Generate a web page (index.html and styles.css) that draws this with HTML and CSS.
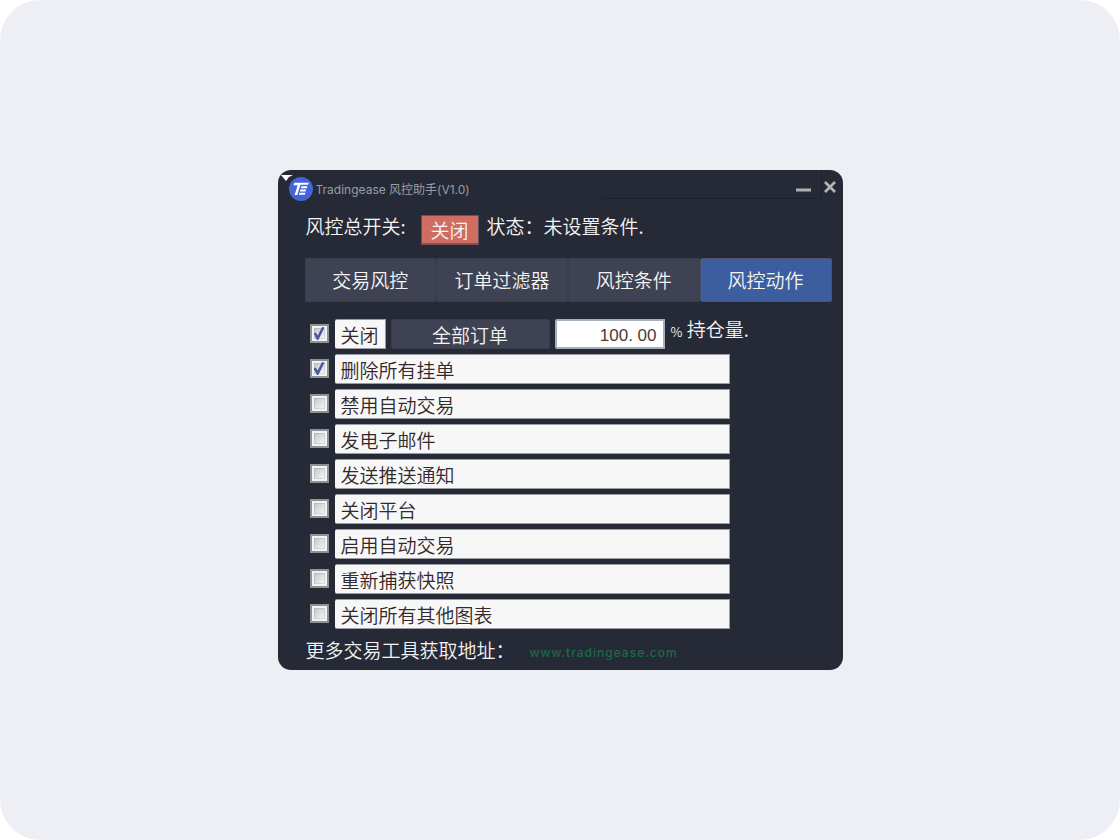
FILE: index.html
```html
<!DOCTYPE html>
<html lang="zh-CN">
<head>
    <meta charset="UTF-8">
    <meta name="viewport" content="width=device-width, initial-scale=1.0">
    <title>Tradingease 风控助手</title>
    <link rel="stylesheet" href="styles.css">
</head>
<body>
    <main class="stage">
        <div class="panel">
            <svg class="corner" width="12" height="7" viewBox="0 0 12 7"><path d="M0 0H12L8 2L5 6Z" fill="#fff"/></svg>

            <!-- 标题栏 -->
            <header class="titlebar">
                <svg class="logo" width="24" height="24" viewBox="0 0 24 24">
                    <circle cx="12" cy="12" r="12" fill="#4465d8"/>
                    <path d="M5.4 5.8H19.8L19.1 7.8H11.4L8.2 18H5.6L8.7 8.2H4.4Z" fill="#fff"/>
                    <path d="M12.4 9.3H18.4L17.8 11.2H11.8ZM11.4 12.5H17.2L16.6 14.4H10.8ZM10.4 15.8H16.4L15.8 17.8H9.8Z" fill="#fff"/>
                </svg>
                <h1>Tradingease 风控助手(V1.0)</h1>
                <div class="window-bar">
                    <button type="button" class="icon-btn" aria-label="最小化">
                        <svg width="15" height="4" viewBox="0 0 15 4"><path d="M0 .5H15V3.5H0Z" fill="#b0b0b3"/></svg>
                    </button>
                </div>
                <button type="button" class="icon-btn close" aria-label="关闭窗口">
                    <svg width="12" height="12" viewBox="0 0 12 12"><path d="M1 1L11 11M11 1L1 11" stroke="#b6b6b6" stroke-width="2.6"/></svg>
                </button>
            </header>

            <div class="master">
                <span class="master-label">风控总开关:</span>
                <button type="button" class="switch">关闭</button>
                <span>状态：未设置条件.</span>
            </div>

            <nav class="tabs">
                <button type="button">交易风控</button>
                <button type="button">订单过滤器</button>
                <button type="button">风控条件</button>
                <button type="button" class="active">风控动作</button>
            </nav>

            <!-- 风控动作列表 -->
            <div class="actions">
                <div class="row">
                    <input type="checkbox" id="a1" checked>
                    <label for="a1" class="short">关闭</label>
                    <button type="button" class="orders">全部订单</button>
                    <input type="text" class="percent" id="percent" value="100. 00">
                    <label for="percent" class="unit"><small>%</small> 持仓量.</label>
                </div>
                <div class="row">
                    <input type="checkbox" id="a2" checked>
                    <label for="a2" class="field">删除所有挂单</label>
                </div>
                <div class="row">
                    <input type="checkbox" id="a3">
                    <label for="a3" class="field">禁用自动交易</label>
                </div>
                <div class="row">
                    <input type="checkbox" id="a4">
                    <label for="a4" class="field">发电子邮件</label>
                </div>
                <div class="row">
                    <input type="checkbox" id="a5">
                    <label for="a5" class="field">发送推送通知</label>
                </div>
                <div class="row">
                    <input type="checkbox" id="a6">
                    <label for="a6" class="field">关闭平台</label>
                </div>
                <div class="row">
                    <input type="checkbox" id="a7">
                    <label for="a7" class="field">启用自动交易</label>
                </div>
                <div class="row">
                    <input type="checkbox" id="a8">
                    <label for="a8" class="field">重新捕获快照</label>
                </div>
                <div class="row">
                    <input type="checkbox" id="a9">
                    <label for="a9" class="field">关闭所有其他图表</label>
                </div>
            </div>

            <footer>
                <span>更多交易工具获取地址：</span>
                <a href="#">www.tradingease.com</a>
            </footer>
        </div>
    </main>
</body>
</html>
```
FILE: styles.css
```css
* {
    box-sizing: border-box;
}

body {
    margin: 0;
    background-color: #fff;
    font-family: "Noto Sans CJK SC", sans-serif;
    font-size: 19px;
    font-weight: 350;
    line-height: 30px;
    color: #f4f4f4;
}

button, input {
    margin: 0;
    padding: 0;
    border: none;
    font: inherit;
    color: inherit;
}

.stage {
    display: flex;
    align-items: center;
    justify-content: center;
    min-height: 100vh;
    background-color: #eeeff5;
    border-radius: 40px;
}

.panel {
    position: relative;
    width: 100%;
    max-width: 565px;
    padding: 0 11px;
    background-color: #262a36;
    border-radius: 13px;
}

.corner {
    position: absolute;
    top: 5px;
    left: 3px;
}

/* 标题栏 */
.titlebar {
    display: flex;
    height: 40px;
}

.logo {
    margin-top: 7px;
}

h1 {
    flex: 1;
    margin: 0 0 0 3px;
    font-family: Inter, "Noto Sans CJK SC", sans-serif;
    font-size: 12px;
    font-weight: 400;
    line-height: 39px;
    color: #9b9ca3;
}

.window-bar {
    display: flex;
    justify-content: flex-end;
    width: 220px;
    height: 29px;
    padding: 18px 10px 0 0;
    border-right: 1px solid #1f222d;
    border-bottom: 1px solid #1f222d;
}

.icon-btn {
    display: flex;
    height: 12px;
    background: none;
    cursor: pointer;
}

.close {
    margin: 11px -4px 0 2px;
}

/* 总开关 */
.master {
    display: flex;
    align-items: center;
    height: 40px;
    padding: 0 0 4px 17px;
    line-height: 24px;
}

.master span {
    padding-bottom: 4px;
}

.master-label {
    width: 115px;
}

.switch {
    width: 58px;
    height: 30px;
    margin: 4px 8px 0 0;
    background-color: #d06c62;
    border: 1px solid #5a5560;
    border-bottom: 2px solid #7d5257;
}

/* 选项卡 */
.tabs {
    display: flex;
    margin: 8px 0 17px 16px;
}

.tabs button {
    flex: 1;
    height: 44px;
    background-color: #3e4252;
    border: 1px solid #3a3e4d;
    border-radius: 2px;
}

.tabs .active {
    background-color: #3c5e9e;
    border: 1px solid #4b546b;
}

/* 动作列表 */
.actions {
    display: grid;
    gap: 5px;
    padding-left: 21px;
}

.row {
    display: flex;
    height: 30px;
}

input[type="checkbox"] {
    appearance: none;
    display: grid;
    place-items: center;
    width: 19px;
    height: 19px;
    margin: 5px 6px 0 0;
    border: 2px solid #8f9194;
    background: linear-gradient(135deg, #c5c9cf, #f4f4f4) center / 9px 9px no-repeat,
                linear-gradient(135deg, #b0b4ba, #dcdee0) center / 11px 11px no-repeat, #f3f3f3;
}

input[type="checkbox"]:checked::after {
    content: "";
    width: 11px;
    height: 13px;
    background-color: #485a9c;
    clip-path: polygon(0 50%, 20% 42%, 38% 66%, 78% 0, 100% 4%, 44% 100%, 32% 100%);
}

.field, .short {
    padding: 0 6px;
    background-color: #f7f7f7;
    border: 1px solid #9b9da3;
    border-left: none;
    border-radius: 2px 0 0 2px;
    color: #33282a;
}

.field {
    width: 395px;
}

.short {
    width: 51px;
    margin-right: 5px;
}

.orders {
    width: 159px;
    margin-right: 5px;
    background-color: #3e4252;
    border: 1px solid #393d4b;
    border-radius: 2px;
}

.percent {
    width: 110px;
    margin-right: 6px;
    padding: 3px 6px 0;
    background-color: #fff;
    border: 2px solid #a5aebb;
    border-radius: 2px 0 0 2px;
    color: #4a3b35;
    font-family: "Liberation Sans", Arial, sans-serif;
    font-size: 17px;
    text-align: right;
}

.unit {
    line-height: 20px;
}

.unit small {
    font-size: 13px;
}

footer {
    display: flex;
    height: 41px;
    padding: 6px 0 0 17px;
}

footer a {
    margin-left: 15px;
    font-family: Inter, sans-serif;
    font-size: 12px;
    font-weight: 500;
    letter-spacing: 1px;
    line-height: 36px;
    color: #1b6a48;
    text-decoration: none;
}
```
